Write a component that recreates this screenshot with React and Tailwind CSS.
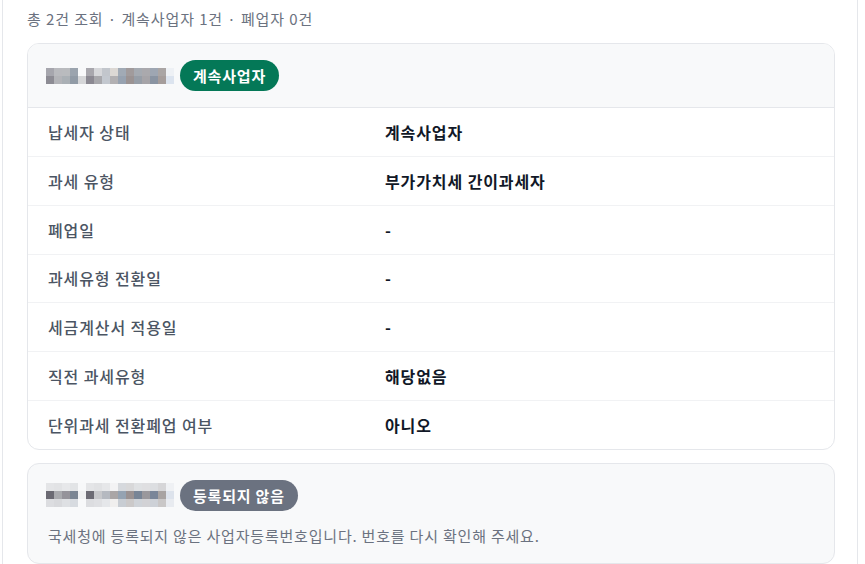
import React from 'react';

// Blurred business-number placeholders (8px mosaic cells)
const MASK_ACTIVE = [
  ['#a6a6ad', '#b9babe', '#b9bbbe', '#9ba4ae', '#f8f9fa', '#a8a7ad', '#d6d7da', '#c2c6cc', '#dcd8d4', '#a1aab5', '#a19b9c', '#a5aab1', '#aaa9ad', '#9ea6b2', '#aaa5a4', '#eef1f5'],
  ['#8d8c94', '#b3b4b8', '#aab0b5', '#919ba6', '#d5d6d8', '#8b8992', '#a8a8ac', '#c3c8cf', '#b2b0b2', '#97a2b0', '#9b9393', '#979ea7', '#a6a4a8', '#8a94a2', '#a59d9b', '#dce4ef'],
];

const MASK_UNKNOWN = [
  ['#e4e5e7', '#e2e3e5', '#e7e8ea', '#e2e4e6', '#f7f8f9', '#e4e5e7', '#e1e2e4', '#e6e7e9', '#f3f3f4', '#d6d9dd', '#d8d8d9', '#dfe1e3', '#dfdfe1', '#dcdee1', '#d6d6d8', '#eff1f4'],
  ['#6b6a73', '#a9aaae', '#95939a', '#7a8593', '#f0f1f2', '#6c6b74', '#c7c8cb', '#b5b9c0', '#aaa6a6', '#95a3b2', '#9a9292', '#788596', '#9a989c', '#7a8699', '#a8a3a2', '#dde3ec'],
  ['#dcdde0', '#d8d9dc', '#dee0e3', '#d7dbe0', '#f8f9fa', '#dcdde0', '#dfe0e3', '#e5e7ea', '#f0efee', '#c8cdd3', '#cbc9c9', '#cfd3d8', '#d2d2d5', '#cdd1d7', '#c9c7c7', '#e8ebf0'],
];

const DETAILS = [
  ['납세자 상태', '계속사업자'],
  ['과세 유형', '부가가치세 간이과세자'],
  ['폐업일', '-'],
  ['과세유형 전환일', '-'],
  ['세금계산서 적용일', '-'],
  ['직전 과세유형', '해당없음'],
  ['단위과세 전환폐업 여부', '아니오'],
];

function MaskedNumber({ cells }) {
  return (
    <div className="flex flex-col">
      {cells.map((row, r) => (
        <div key={r} className="flex">
          {row.map((c, i) => (
            <span key={i} className="block w-2 h-2" style={{ backgroundColor: c }} />
          ))}
        </div>
      ))}
    </div>
  );
}

function Badge({ tone, children }) {
  const cls = tone === 'green' ? 'bg-[#047857]' : 'bg-[#6b7280]';
  return (
    <span className={`${cls} inline-flex items-center h-[31px] px-[13px] rounded-full text-white text-[15px] font-bold leading-none tracking-[0.8px]`}>
      {children}
    </span>
  );
}

export default function App() {
  return (
    <div
      className="w-[865px] h-[564px] overflow-hidden bg-white"
      style={{ fontFamily: '"Noto Sans CJK KR", "Noto Sans", sans-serif' }}
    >
      <div className="ml-[2px] w-[856px] min-h-full border-x border-[#e5e7eb] pl-6 pr-[22px] pt-[9px]">
        <p className="text-[15px] leading-5 tracking-[0.9px] text-[#6b7280] mb-[14px]">
          총 2건 조회 · 계속사업자 1건 · 폐업자 0건
        </p>

        <div className="flex flex-col gap-[13px]">
          {/* registered business */}
          <div className="border border-[#e5e7eb] rounded-xl overflow-hidden">
            <div className="flex items-center gap-[6px] pl-[18px] pr-5 py-4 bg-[#f8f9fa] border-b border-[#e5e7eb]">
              <MaskedNumber cells={MASK_ACTIVE} />
              <Badge tone="green">계속사업자</Badge>
            </div>
            <div>
              {DETAILS.map(([label, value], i) => (
                <div
                  key={label}
                  className={`flex items-center px-5 text-[16px] tracking-[0.9px] ${i === 0 ? 'h-[48px]' : 'h-[48.8px] border-t border-[#f1f2f4]'}`}
                >
                  <span className="w-[337px] shrink-0 text-[#4b5563] font-medium">{label}</span>
                  <span className="font-bold text-[#111827]">{value}</span>
                </div>
              ))}
            </div>
          </div>

          {/* number not registered */}
          <div className="border border-[#e5e7eb] rounded-xl bg-[#f8f9fa] pl-[18px] pr-5 pt-4 pb-[17px]">
            <div className="flex items-center gap-[6px]">
              <MaskedNumber cells={MASK_UNKNOWN} />
              <Badge tone="gray">등록되지 않음</Badge>
            </div>
            <p className="mt-[15px] ml-[2px] text-[15px] leading-5 tracking-[0.8px] text-[#6b7280]">
              국세청에 등록되지 않은 사업자등록번호입니다. 번호를 다시 확인해 주세요.
            </p>
          </div>
        </div>
      </div>
    </div>
  );
}
